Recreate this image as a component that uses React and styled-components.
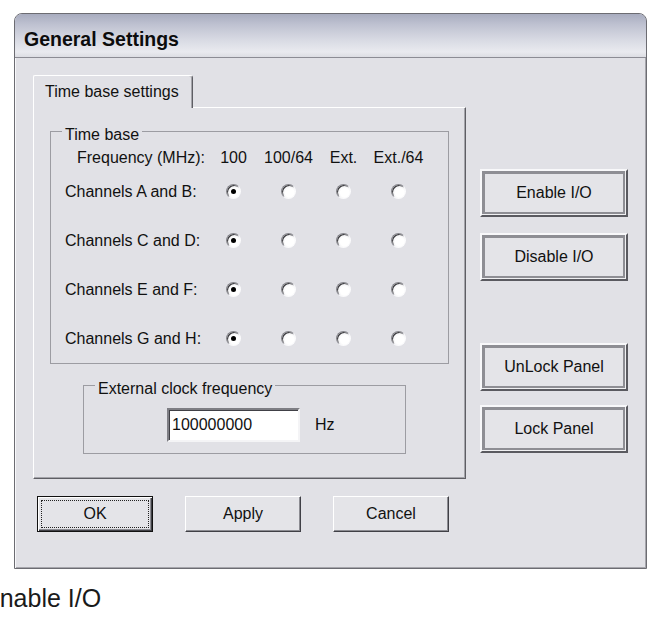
import React from 'react';
import styled, { createGlobalStyle } from 'styled-components';

const GlobalStyle = createGlobalStyle`
  html, body {
    margin: 0;
    padding: 0;
    background: #fff;
    overflow: hidden;
  }
  body {
    font-family: "Liberation Sans", Arial, sans-serif;
    color: #111;
  }
`;

const Page = styled.div`
  width: 662px;
  height: 633px;
  box-sizing: border-box;
  padding: 13px 0 0 14px;
  overflow: hidden;
`;

const Window = styled.div`
  width: 633px;
  box-sizing: border-box;
  border: 1px solid #6c6c72;
  border-radius: 8px 8px 0 0;
  background: #e1e1e6;
  box-shadow: inset 1px 0 0 #f8f8fa, inset -1px -1px 0 #a6a6ac;
  overflow: hidden;
`;

const TitleBar = styled.div`
  height: 44px;
  box-sizing: border-box;
  display: flex;
  align-items: center;
  padding: 8px 0 0 9px;
  border-bottom: 1px solid #8c8c94;
  background: linear-gradient(to bottom, #a8acbf 0%, #bfc2d1 25%, #d8dae3 60%, #e9eaef 88%, #dcdde3 100%);
  font: bold 19.5px "Liberation Sans", Arial, sans-serif;
  color: #0c0c0c;
`;

const Body = styled.div`
  display: grid;
  grid-template-columns: 433px 148px;
  column-gap: 14px;
  padding: 17px 18px 36px 18px;
`;

const LeftColumn = styled.div`
  display: flex;
  flex-direction: column;
`;

const RightColumn = styled.div`
  display: flex;
  flex-direction: column;
  padding-top: 94px;
`;

const TabStrip = styled.div`
  display: flex;
`;

const Tab = styled.div`
  width: 160px;
  height: 33px;
  box-sizing: border-box;
  display: flex;
  align-items: center;
  padding-left: 11px;
  margin-bottom: -1px;
  position: relative;
  z-index: 1;
  background: #e1e1e6;
  border-top: 1px solid #fff;
  border-left: 1px solid #fff;
  border-right: 1px solid #5e5e64;
  box-shadow: inset -1px 0 0 #a4a4aa;
  border-radius: 2px 3px 0 0;
  font-size: 16px;
`;

const TabPanel = styled.div`
  height: 372px;
  box-sizing: border-box;
  padding: 11px 0 0 16px;
  border: 1px solid;
  border-color: #fff #5e5e64 #5e5e64 #fff;
  box-shadow: inset -1px -1px 0 #a4a4aa;
`;

const Group = styled.fieldset`
  width: ${p => p.$width}px;
  box-sizing: border-box;
  margin: ${p => p.$top || 0}px 0 0 ${p => p.$indent || 0}px;
  padding: 0;
  min-width: 0;
  border: 1px solid #9c9ca2;
`;

const Legend = styled.legend`
  margin-left: 11px;
  padding: 7px 3px 0;
  font-size: 16px;
  line-height: 18px;
`;

const ChannelGrid = styled.div`
  display: grid;
  grid-template-columns: 141px repeat(4, 55px);
  grid-template-rows: 18px repeat(4, 49px);
  align-items: center;
  padding: 5px 0 0 14px;
  font-size: 16px;
  line-height: 18px;
`;

const HeadCell = styled.div`
  text-align: ${p => (p.$label ? 'left' : 'center')};
  padding-left: ${p => (p.$label ? 12 : 0)}px;
  white-space: nowrap;
`;

const RowLabel = styled.div`
  white-space: nowrap;
`;

const Radio = styled.span`
  justify-self: center;
  width: 15px;
  height: 15px;
  box-sizing: border-box;
  border-radius: 50%;
  border: 1px solid;
  border-color: #86868c #fafafc #fafafc #86868c;
  background: radial-gradient(circle at 60% 60%, #fff 0 40%, #e4e4e8 85%);
  box-shadow: inset 1px 1px 0 #3a3a3e;
  display: flex;
  align-items: center;
  justify-content: center;

  &::after {
    content: '';
    width: 5px;
    height: 5px;
    border-radius: 50%;
    background: ${p => (p.$checked ? '#000' : 'transparent')};
  }
`;

const ClockRow = styled.div`
  display: flex;
  align-items: center;
  padding: 10px 0 11px 83px;
  font-size: 16px;
`;

const FreqInput = styled.input`
  width: 133px;
  height: 34px;
  box-sizing: border-box;
  padding: 0 0 0 3px;
  border: 2px solid;
  border-color: #7e7e84 #f4f4f6 #f4f4f6 #7e7e84;
  box-shadow: inset 1px 1px 0 #404046;
  background: #fff;
  outline: none;
  font: 16px "Liberation Sans", Arial, sans-serif;
  color: #111;
`;

const Unit = styled.span`
  margin-left: 15px;
`;

const ButtonRow = styled.div`
  display: flex;
  gap: 32px;
  margin: 17px 0 0 4px;
`;

const DialogButton = styled.button`
  width: 116px;
  height: 36px;
  box-sizing: border-box;
  display: flex;
  padding: 3px;
  background: #e4e4e8;
  border: 1px solid;
  border-color: ${p => (p.$default ? '#111' : '#fff #404046 #404046 #fff')};
  box-shadow: ${p =>
    p.$default
      ? 'inset 1px 1px 0 #fff, inset -1px -1px 0 #404046, inset -2px -2px 0 #8c8c92'
      : 'inset -1px -1px 0 #8c8c92'};
  font: 16px "Liberation Sans", Arial, sans-serif;
  color: #111;
`;

const ButtonFace = styled.span`
  flex: 1;
  display: flex;
  align-items: center;
  justify-content: center;
  border: 1px dotted ${p => (p.$focused ? '#222' : 'transparent')};
`;

const PanelButton = styled.button`
  width: 148px;
  height: 48px;
  box-sizing: border-box;
  margin-top: ${p => p.$gap || 0}px;
  border: 2px solid;
  border-color: #f8f8fa #5a5a60 #5a5a60 #f8f8fa;
  box-shadow: inset -1px -1px 0 #f0f0f2, inset 0 0 0 3px #8e8e94;
  background: #e4e4e8;
  font: 16px "Liberation Sans", Arial, sans-serif;
  color: #111;
`;

const Caption = styled.div`
  margin: 15px 0 0 -31px;
  font: 25px/29px "Liberation Sans", Arial, sans-serif;
  color: #1a1a1a;
  white-space: nowrap;
`;

const columns = ['100', '100/64', 'Ext.', 'Ext./64'];
const channels = ['A and B', 'C and D', 'E and F', 'G and H'];

const App = () => (
  <Page>
    <GlobalStyle />
    <Window>
      <TitleBar>General Settings</TitleBar>
      <Body>
        <LeftColumn>
          <TabStrip>
            <Tab>Time base settings</Tab>
          </TabStrip>
          <TabPanel>
            <Group $width={399}>
              <Legend>Time base</Legend>
              <ChannelGrid>
                <HeadCell $label>Frequency (MHz):</HeadCell>
                {columns.map(c => (
                  <HeadCell key={c}>{c}</HeadCell>
                ))}
                {channels.map(ch => (
                  <React.Fragment key={ch}>
                    <RowLabel>{`Channels ${ch}:`}</RowLabel>
                    {columns.map((c, i) => (
                      <Radio key={c} role="radio" aria-checked={i === 0} $checked={i === 0} />
                    ))}
                  </React.Fragment>
                ))}
              </ChannelGrid>
            </Group>
            <Group $width={323} $indent={33} $top={9}>
              <Legend>External clock frequency</Legend>
              <ClockRow>
                <FreqInput readOnly value="100000000" />
                <Unit>Hz</Unit>
              </ClockRow>
            </Group>
          </TabPanel>
          <ButtonRow>
            <DialogButton $default>
              <ButtonFace $focused>OK</ButtonFace>
            </DialogButton>
            <DialogButton>
              <ButtonFace>Apply</ButtonFace>
            </DialogButton>
            <DialogButton>
              <ButtonFace>Cancel</ButtonFace>
            </DialogButton>
          </ButtonRow>
        </LeftColumn>
        <RightColumn>
          <PanelButton>Enable I/O</PanelButton>
          <PanelButton $gap={16}>Disable I/O</PanelButton>
          <PanelButton $gap={62}>UnLock Panel</PanelButton>
          <PanelButton $gap={14}>Lock Panel</PanelButton>
        </RightColumn>
      </Body>
    </Window>
    <Caption>Enable I/O</Caption>
  </Page>
);

export default App;
